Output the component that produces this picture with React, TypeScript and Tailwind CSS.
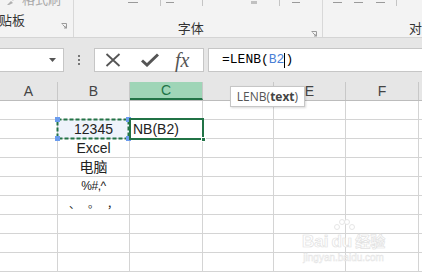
import React from "react";

const cols = [
  { key: "A", w: "w-[58px]" },
  { key: "B", w: "w-[72px]" },
  { key: "C", w: "w-[73px]" },
  { key: "D", w: "w-[71px]" },
  { key: "E", w: "w-[72px]" },
  { key: "F", w: "w-[73px]" },
  { key: "G", w: "w-[20px]" },
];

// D is hidden under the tooltip, G is cut off at the window edge
const hiddenHeaders = ["D", "G"];

const bValues: React.ReactNode[] = [
  "",
  "12345",
  "Excel",
  "电脑",
  <span className="text-[12px] tracking-[-0.5px]">%#,^</span>,
  <span className="flex w-full items-end justify-center gap-[8px] pb-[1px] text-[11px] leading-none">
    <span>、</span>
    <span>。</span>
    <span>，</span>
  </span>,
  "",
  "",
  "",
];

const Launcher = () => (
  <svg width="6" height="6" viewBox="0 0 6 6" className="text-[#9a9a9a]">
    <path d="M0.5 0.5h5v5" fill="none" stroke="currentColor" />
    <path d="M1.5 1.5l3.5 3.5M5 3v2h-2" fill="none" stroke="currentColor" />
  </svg>
);

const Ribbon = () => (
  <div className="flex h-[38px] border-b border-[#d4d4d4] bg-[#f3f3f3] text-[13px] text-[#333]">
    <div className="flex w-[74px] flex-col border-r border-[#d8d8d8] pr-[6px]">
      <div className="-mt-[8px] flex h-[16px] items-center gap-[5px] pl-[6px] text-[#a8a8a8]">
        <svg width="11" height="11" viewBox="0 0 11 11">
          <path d="M1 10l4-4 2 2-4 2z" fill="#b0b0b0" />
          <path d="M6 5l3-4 1 1-3 4z" fill="#c4c4c4" />
        </svg>
        <span>格式刷</span>
      </div>
      <div className="mt-[5px] flex items-end justify-between">
        <span className="-ml-[1px] leading-[16px]">贴板</span>
        <Launcher />
      </div>
    </div>
    <div className="relative flex w-[250px] flex-col border-r border-[#d8d8d8] pr-[5px]">
      <div className="flex h-[6px] items-start">
        <div className="ml-[54px] mt-[2px] h-px w-[10px] bg-[#9a9a9a]" />
        <div className="ml-[22px] h-[6px] w-px bg-[#c4c4c4]" />
        <div className="ml-[5px] mt-[2px] h-px w-[8px] bg-[#9a9a9a]" />
        <div className="ml-[28px] h-[6px] w-px bg-[#c4c4c4]" />
        <div className="ml-[48px] mt-[1px] h-[3px] w-[6px] bg-[#c0c0c0]" />
        <div className="ml-[22px] h-[6px] w-px bg-[#c4c4c4]" />
        <div className="ml-[12px] mt-[2px] h-px w-[8px] bg-[#9a9a9a]" />
      </div>
      <div className="mt-[15px] flex items-end justify-between">
        <span className="ml-[104px] leading-[16px]">字体</span>
        <Launcher />
      </div>
    </div>
    <div className="flex flex-1 flex-col">
      <div className="flex h-[6px] items-start">
        <div className="ml-[10px] mt-[2px] h-px w-[9px] bg-[#9a9a9a]" />
        <div className="ml-[12px] mt-[2px] h-px w-[9px] bg-[#9a9a9a]" />
        <div className="ml-[13px] mt-[2px] h-px w-[9px] bg-[#9a9a9a]" />
        <div className="ml-[11px] h-[6px] w-px bg-[#c4c4c4]" />
      </div>
      <div className="mt-[15px] flex items-end">
        <span className="ml-[86px] leading-[16px]">对</span>
      </div>
    </div>
  </div>
);

const FormulaBar = () => (
  <div className="flex h-[44px] items-start bg-[#e6e6e6] pt-[10px]">
    <div className="flex h-[24px] w-[64px] items-center justify-end border border-l-0 border-[#c6c6c6] bg-white pr-[7px]">
      <svg width="7" height="4" viewBox="0 0 7 4">
        <path d="M0 0h7L3.5 4z" fill="#555" />
      </svg>
    </div>
    <div className="flex h-[24px] w-[30px] flex-col items-center justify-center gap-[2px]">
      <div className="h-[2px] w-[2px] bg-[#777]" />
      <div className="h-[2px] w-[2px] bg-[#777]" />
      <div className="h-[2px] w-[2px] bg-[#777]" />
    </div>
    <div className="flex h-[24px] w-[110px] items-center border border-[#c6c6c6] bg-white">
      <svg width="16" height="14" viewBox="0 0 16 14" className="ml-[10px]">
        <path d="M1.5 1l13 12M14.5 1l-13 12" stroke="#555" strokeWidth="1.8" />
      </svg>
      <svg width="18" height="14" viewBox="0 0 18 14" className="ml-[20px]">
        <path d="M1 7.5l5 4.5L17 1.5" fill="none" stroke="#555" strokeWidth="3" />
      </svg>
      <span className="ml-[16px] font-['Liberation_Serif'] text-[20px] italic leading-none text-[#555]">
        fx
      </span>
    </div>
    <div className="ml-[4px] flex h-[24px] flex-1 items-center border border-r-0 border-[#c6c6c6] bg-white pl-[13px] font-['Liberation_Mono'] text-[13px] text-black">
      <span>=LENB(</span>
      <span className="text-[#4a7fd6]">B2</span>
      <span className="h-[15px] w-px bg-black" />
      <span>)</span>
    </div>
  </div>
);

export default function App() {
  return (
    <div className="relative h-[277px] w-[422px] overflow-hidden bg-white font-['Liberation_Sans','Noto_Sans_CJK_SC',sans-serif]">
      <Ribbon />
      <FormulaBar />
      <div className="relative">
        <div className="flex h-[19px] border-b border-[#bcbcbc] bg-[#e6e6e6]">
          {cols.map((c) => (
            <div
              key={c.key}
              className={`${c.w} flex shrink-0 items-center justify-center border-r border-[#c8c8c8] text-[14px] ${
                c.key === "C"
                  ? "border-b-2 border-b-[#217346] bg-[#9fd5b7] text-[#217346]"
                  : "text-[#444]"
              }`}
            >
              {hiddenHeaders.includes(c.key) ? null : c.key}
            </div>
          ))}
        </div>
        {bValues.map((v, i) => (
          <div key={i} className="flex h-[19px]">
            {cols.map((c) => (
              <div
                key={c.key}
                className={`${c.w} flex shrink-0 items-center justify-center border-r border-b border-[#d4d4d4] text-[14px] text-[#222] ${
                  i === 1 && c.key === "B" ? "bg-[#eef3fb]" : ""
                }`}
              >
                {c.key === "B" ? v : null}
                {c.key === "C" && i === 1 ? (
                  <span className="w-full pl-[3px] text-left">NB(B2)</span>
                ) : null}
              </div>
            ))}
          </div>
        ))}

        {/* B2 reference marquee */}
        <svg
          width="78"
          height="26"
          viewBox="0 0 78 26"
          className="absolute left-[54px] top-[34px]"
        >
          <rect
            x="3.5"
            y="3.5"
            width="71"
            height="19"
            fill="none"
            stroke="#217346"
            strokeWidth="2"
            strokeDasharray="4 2"
          />
          <rect x="1" y="1" width="5" height="5" fill="#6b9cee" />
          <rect x="72" y="1" width="5" height="5" fill="#6b9cee" />
          <rect x="1" y="20" width="5" height="5" fill="#6b9cee" />
          <rect x="72" y="20" width="5" height="5" fill="#6b9cee" />
        </svg>

        {/* active cell C2 */}
        <div className="absolute left-[129px] top-[36px] h-[22px] w-[75px] border-2 border-[#217346]" />
        <div className="absolute left-[201px] top-[55px] h-[5px] w-[5px] border border-white bg-[#217346]" />

        {/* function tooltip */}
        <div className="absolute left-[230px] top-[4px] flex h-[21px] w-[75px] items-center justify-center border border-[#c6c6c6] bg-white font-['Open_Sans'] text-[12px] text-[#555] shadow-[1px_1px_2px_rgba(0,0,0,0.15)]">
          LENB(<span className="font-bold text-[#444]">text</span>)
        </div>
      </div>

      {/* watermark */}
      <div className="pointer-events-none absolute left-[302px] top-[218px] flex flex-col items-center text-white">
        <svg width="24" height="16" viewBox="0 0 24 16">
          <circle cx="5" cy="9" r="2.5" fill="white" stroke="#e6e6e6" />
          <circle cx="10" cy="4" r="2.5" fill="white" stroke="#e6e6e6" />
          <circle cx="15" cy="4" r="2.5" fill="white" stroke="#e6e6e6" />
          <circle cx="20" cy="9" r="2.5" fill="white" stroke="#e6e6e6" />
        </svg>
        <div className="-mt-[1px] flex items-center gap-[3px] text-[17px] font-bold leading-none [-webkit-text-stroke:0.7px_#e2e2e2]">
          <span>Bai</span>
          <span>du</span>
          <span className="text-[15px]">经验</span>
        </div>
        <div className="mt-[3px] text-[10px] leading-none [-webkit-text-stroke:0.5px_#e4e4e4]">
          jingyan.baidu.com
        </div>
      </div>
    </div>
  );
}
